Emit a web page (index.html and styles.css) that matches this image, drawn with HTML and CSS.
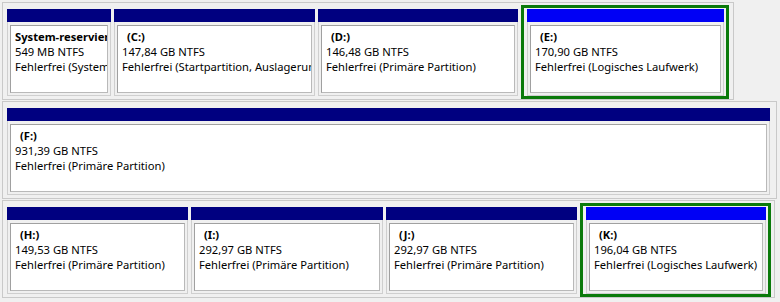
FILE: index.html
```html
<!DOCTYPE html>
<html lang="de">
<head>
<meta charset="utf-8">
<title>Datenträgerverwaltung</title>
<link rel="stylesheet" href="styles.css">
</head>
<body>
<div class="panel">
  <div class="disk disk-1">
    <div class="slot w-sys">
      <div class="part">
        <div class="bar"></div>
        <div class="body"><div class="box">
          <div class="name">System-reserviert</div>
          <div>549 MB NTFS</div>
          <div>Fehlerfrei (Systempartition, Aktiv, Primäre Partition)</div>
        </div></div>
      </div>
    </div>
    <div class="slot w-c">
      <div class="part">
        <div class="bar"></div>
        <div class="body"><div class="box">
          <div class="name drive">(C:)</div>
          <div>147,84 GB NTFS</div>
          <div>Fehlerfrei (Startpartition, Auslagerungsdatei, Absturzabbild, Primäre Partition)</div>
        </div></div>
      </div>
    </div>
    <div class="slot w-d">
      <div class="part">
        <div class="bar"></div>
        <div class="body"><div class="box">
          <div class="name drive">(D:)</div>
          <div>146,48 GB NTFS</div>
          <div>Fehlerfrei (Primäre Partition)</div>
        </div></div>
      </div>
    </div>
    <div class="slot w-e selected">
      <div class="part">
        <div class="bar logical"></div>
        <div class="body"><div class="box">
          <div class="name drive">(E:)</div>
          <div>170,90 GB NTFS</div>
          <div>Fehlerfrei (Logisches Laufwerk)</div>
        </div></div>
      </div>
    </div>
  </div>

  <div class="disk disk-2">
    <div class="slot w-f">
      <div class="part">
        <div class="bar"></div>
        <div class="body"><div class="box">
          <div class="name drive">(F:)</div>
          <div>931,39 GB NTFS</div>
          <div>Fehlerfrei (Primäre Partition)</div>
        </div></div>
      </div>
    </div>
  </div>

  <div class="disk disk-3">
    <div class="slot w-h">
      <div class="part">
        <div class="bar"></div>
        <div class="body"><div class="box">
          <div class="name drive">(H:)</div>
          <div>149,53 GB NTFS</div>
          <div>Fehlerfrei (Primäre Partition)</div>
        </div></div>
      </div>
    </div>
    <div class="slot w-i">
      <div class="part">
        <div class="bar"></div>
        <div class="body"><div class="box">
          <div class="name drive">(I:)</div>
          <div>292,97 GB NTFS</div>
          <div>Fehlerfrei (Primäre Partition)</div>
        </div></div>
      </div>
    </div>
    <div class="slot w-j">
      <div class="part">
        <div class="bar"></div>
        <div class="body"><div class="box">
          <div class="name drive">(J:)</div>
          <div>292,97 GB NTFS</div>
          <div>Fehlerfrei (Primäre Partition)</div>
        </div></div>
      </div>
    </div>
    <div class="slot w-k selected">
      <div class="part">
        <div class="bar logical"></div>
        <div class="body"><div class="box">
          <div class="name drive">(K:)</div>
          <div>196,04 GB NTFS</div>
          <div>Fehlerfrei (Logisches Laufwerk)</div>
        </div></div>
      </div>
    </div>
  </div>
</div>
</body>
</html>
```
FILE: styles.css
```css
html, body {
  margin: 0;
  padding: 0;
  background: #f0f0f0;
}

body {
  width: 780px;
  height: 302px;
  overflow: hidden;
  font-family: "Noto Sans", "Open Sans", sans-serif;
  font-size: 11.2px;
  color: #000;
}

.panel {
  display: flex;
  flex-direction: column;
  gap: 1px;
  padding: 2px 0 0 2px;
}

.disk {
  display: flex;
  gap: 3px;
  padding: 2px 4px 0 4px;
  border: 1px solid #c9c9c9;
  background: #f0f0f0;
}

.disk-1 { width: 722px; }
.disk-2 { width: 763px; padding-right: 6px; }
.disk-3 { width: 763px; padding-right: 4px; }

.slot {
  margin: 4px 0 3px 0;
  flex: none;
}

.slot.selected {
  margin: 0;
  border: 3px solid #0b7a0b;
  padding: 1px 2px 0 3px;
}

.w-sys { width: 104px; }
.w-c { width: 201px; }
.w-d { width: 200px; }
.w-e { width: 197px; }
.w-f { width: 763px; }
.w-h { width: 181px; }
.w-i { width: 192px; }
.w-j { width: 191px; }
.w-k { width: 180px; }

.part {
  display: flex;
  flex-direction: column;
}

.bar {
  height: 13px;
  background: #000080;
}

.bar.logical {
  background: #0000f5;
}

.body {
  border: 1px solid #cfcfcf;
  border-top: none;
  padding: 3px 2px 2px 2px;
  background: #f0f0f0;
}

.box {
  box-sizing: border-box;
  height: 68px;
  background: #fff;
  border: 1px solid #a0a0a0;
  border-right-color: #b9b9b9;
  border-bottom-color: #b9b9b9;
  padding: 3px 0 0 4px;
  overflow: hidden;
  line-height: 15px;
  white-space: nowrap;
}

.box > div {
  overflow: hidden;
}

.name {
  font-weight: 700;
}

.drive {
  padding-left: 5px;
}
```
